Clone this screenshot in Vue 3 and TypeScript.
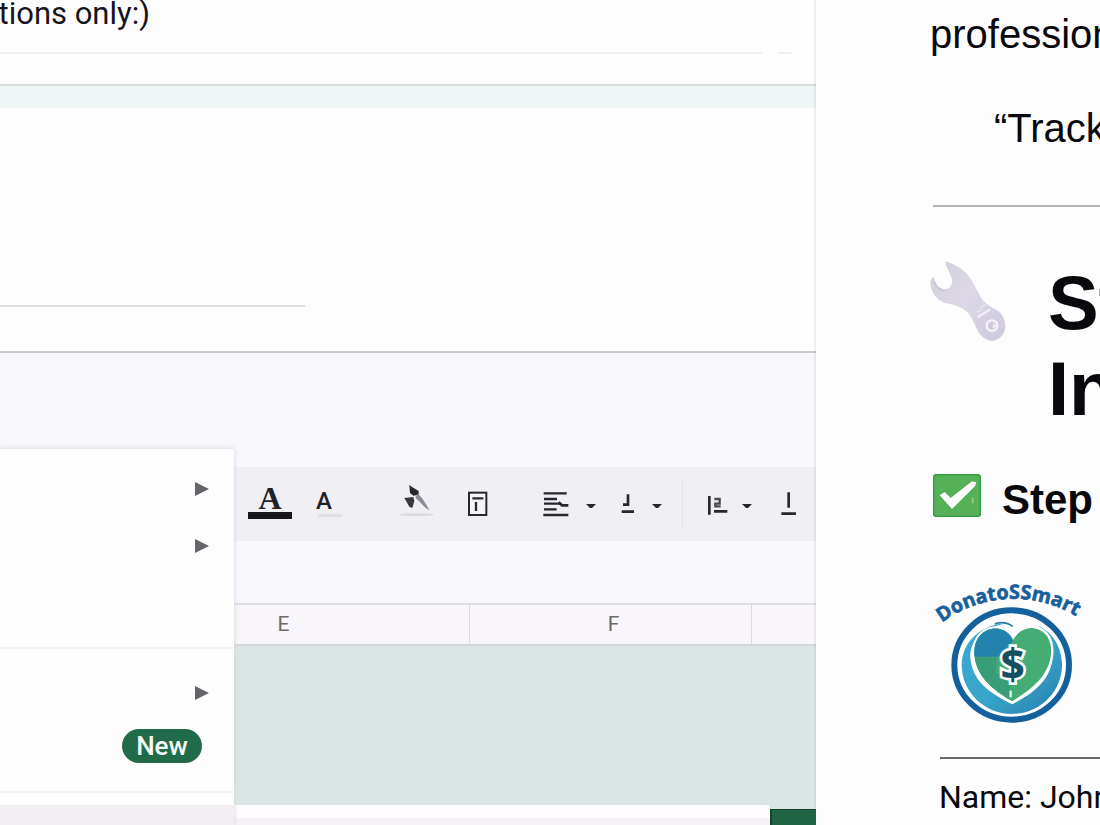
<script setup lang="ts">
interface MenuEntry {
  id: string
  label: string
  submenu?: boolean
  badge?: string
}

const upperEntries: MenuEntry[] = [
  { id: 'first', label: 'Open submenu', submenu: true },
  { id: 'second', label: 'Open submenu', submenu: true },
  { id: 'third', label: 'Menu entry' },
]
const lowerEntries: MenuEntry[] = [
  { id: 'fourth', label: 'Open submenu', submenu: true },
  { id: 'fifth', label: 'New feature', badge: 'New' },
]
const columns: string[] = ['E', 'F', '']
</script>

<template>
  <div class="workspace">
    <section class="sheet">
      <div class="prompt"><span>tions only:)</span></div>
      <div class="rule-row"><i class="rule-long"></i><i class="rule-dash"></i></div>
      <div class="band"></div>
      <div class="field"></div>
      <div class="chrome">
        <div class="toolbar" role="toolbar">
          <button class="tool color" aria-label="Text color"><b>A</b><i></i></button>
          <button class="tool letter" aria-label="Font"><b>A</b><i></i></button>
          <button class="tool paint" aria-label="Fill color">
            <svg viewBox="498 66 114 111" width="38" height="37">
              <ellipse cx="560" cy="161" rx="52" ry="4" fill="#d9d8df" />
              <path d="M538 71 L546 78 L566 90 L566 101 L550 104 L540 96Z" fill="#29282e" />
              <path d="M523 111 L550 108 L553 120 L547 141 L538 137Z" fill="#38373e" />
              <path d="M562 98 C578 108 586 126 599 148 C584 141 573 124 556 110" fill="#8d8c94" />
            </svg>
          </button>
          <button class="tool box" aria-label="Text box">
            <svg viewBox="702 90 84 84" width="28" height="28">
              <rect x="717" y="98" width="52" height="67" fill="#f5f4f9" stroke="#29282e" stroke-width="6" />
              <path d="M727 115H760M738 126V153" stroke="#29282e" stroke-width="7" fill="none" />
            </svg>
          </button>
          <button class="tool align" aria-label="Horizontal align">
            <svg viewBox="60 84 96 90" width="32" height="30">
              <path d="M71 97H140M72 114H111M72 128H122M72 145H110M70 162H145" stroke="#27262c" stroke-width="7" fill="none" />
              <path d="M116 124L126 133H145" stroke="#27262c" stroke-width="8" fill="none" />
            </svg>
          </button>
          <button class="tool caret" aria-label="Horizontal align options"><svg viewBox="0 0 14 8" width="14" height="8"><path d="M2 2H12L8 6H6Z" /></svg></button>
          <button class="tool small" aria-label="Vertical align">
            <svg viewBox="282 96 84 84" width="28" height="28">
              <path d="M324 109V140H309M305 161H342" stroke="#27262c" stroke-width="8" fill="none" />
            </svg>
          </button>
          <button class="tool caret near" aria-label="Vertical align options"><svg viewBox="0 0 14 8" width="14" height="8"><path d="M2 2H12L8 6H6Z" /></svg></button>
          <i class="separator"></i>
          <button class="tool wrap" aria-label="Text wrapping">
            <svg viewBox="552 92 84 84" width="28" height="28">
              <path d="M568 110V166M582 156H622" stroke="#27262c" stroke-width="8" fill="none" />
              <path d="M583 119H599V133H586V141H602" stroke="#4c4b52" stroke-width="7" fill="none" />
            </svg>
          </button>
          <button class="tool caret near" aria-label="Text wrapping options"><svg viewBox="0 0 14 8" width="14" height="8"><path d="M2 2H12L8 6H6Z" /></svg></button>
          <button class="tool last" aria-label="Text rotation">
            <svg viewBox="762 90 84 84" width="28" height="28">
              <path d="M806 97V143M784 161H828" stroke="#27262c" stroke-width="8" fill="none" />
            </svg>
          </button>
        </div>
      </div>
      <div class="columns">
        <span v-for="(name, index) in columns" :key="index" class="column">{{ name }}</span>
      </div>
      <div class="cells">
        <div class="strip"><i></i></div>
        <div class="tab"></div>
      </div>

      <nav class="menu">
        <div class="group upper">
          <button v-for="entry in upperEntries" :key="entry.id" class="entry" :aria-label="entry.label">
            <svg v-if="entry.submenu" class="arrow" viewBox="0 0 14 14" width="14" height="14"><path d="M0 0L14 7L0 14Z" /></svg>
          </button>
        </div>
        <div class="group lower">
          <button v-for="entry in lowerEntries" :key="entry.id" class="entry" :aria-label="entry.label">
            <svg v-if="entry.submenu" class="arrow" viewBox="0 0 14 14" width="14" height="14"><path d="M0 0L14 7L0 14Z" /></svg>
            <span v-if="entry.badge" class="badge">{{ entry.badge }}</span>
          </button>
        </div>
        <div class="hovered"></div>
      </nav>
    </section>

    <article class="doc">
      <p class="body">profession</p>
      <p class="body quote">“Track</p>
      <hr class="thin" />
      <header class="title">
        <svg viewBox="90 60 228 246" width="76" height="82" aria-hidden="true">
          <defs>
            <linearGradient id="steel" x1="0" y1="0" x2="1" y2="1">
              <stop offset="0" stop-color="#d3cedb" />
              <stop offset=".45" stop-color="#dcd8e6" />
              <stop offset="1" stop-color="#cec9dc" />
            </linearGradient>
          </defs>
          <path d="M135 66 C147 63 157 72 169 78 C191 88 208 106 220 130 L242 171 C251 187 266 197 286 208 C306 218 317 239 316 263 C313 284 296 302 275 303 C255 300 239 287 230 267 C218 238 207 215 186 205 C166 194 150 193 132 188 C109 178 94 157 91 132 C90 120 94 113 102 111 C103 126 113 143 131 147 C149 148 157 137 156 119 C152 102 140 84 135 66Z" fill="url(#steel)" />
          <path d="M103 124 C107 140 118 150 134 153" fill="none" stroke="#bfb9cb" stroke-width="3" />
          <path d="M232 232 L271 208" stroke="#f1eff4" stroke-width="7" />
          <path d="M230 217 L246 209 M241 203 L256 194" stroke="#e8e5ef" stroke-width="5" />
          <circle cx="276" cy="257" r="16" fill="#d0cbdc" stroke="#f5f3f7" stroke-width="7" />
          <path d="M280 249 L291 258 L278 266Z" fill="#f2f0f6" />
        </svg>
        <h1>St<br />In</h1>
      </header>
      <h2 class="step">
        <svg viewBox="99 42 144 129" width="48" height="43" aria-hidden="true">
          <rect x="101" y="44" width="140" height="125" rx="9" fill="#56b058" stroke="#399d43" stroke-width="5" />
          <path d="M119 106 L134 96 L152 114 L216 64 L228 67 L226 77 L156 147Z" fill="#fff" />
          <path d="M218 113V130" stroke="#8acb7d" stroke-width="6" />
        </svg>
        <span>Step</span>
      </h2>
      <svg class="logo" viewBox="42 21 450 432" width="150" height="144" role="img" aria-label="DonatoSSmart">
        <defs>
          <path id="crest" d="M66 146 A360 360 0 0 1 502 150" />
          <linearGradient id="sea" x1="0" y1="0" x2="1" y2="1">
            <stop offset="0" stop-color="#3ba9d4" />
            <stop offset=".55" stop-color="#38a4c9" />
            <stop offset="1" stop-color="#287fae" />
          </linearGradient>
          <clipPath id="heart"><path d="M277 382 C238 358 169 318 163 242 C160 184 202 157 239 165 C259 170 271 181 279 198 C293 172 322 157 348 164 C386 174 398 211 392 248 C380 320 315 356 277 382Z" /></clipPath>
        </defs>
        <ellipse cx="275" cy="273" rx="172" ry="164" fill="#fff" stroke="#14609c" stroke-width="18" />
        <path d="M270 146 C180 149 126 204 125 273 C125 354 194 420 275 420 C360 420 426 353 426 273 C426 218 396 173 354 155 C390 185 406 217 397 259 C386 331 322 367 277 391 C227 365 157 331 151 251 C148 196 194 157 270 146Z" fill="url(#sea)" />
        <path d="M224 150 C244 143 261 144 278 157" fill="none" stroke="#2a78a9" stroke-width="5" />
        <path d="M277 388 C238 364 163 320 156 242 C153 180 202 150 241 158 C259 163 271 174 279 191 C293 165 322 150 350 157 C393 168 405 211 399 248 C387 324 315 364 277 388Z" fill="#fff" />
        <g clip-path="url(#heart)">
          <rect x="155" y="150" width="250" height="240" fill="#43ad74" />
          <path d="M155 150H278V202L236 248H155Z" fill="#2383ad" />
          <path d="M155 250H230V300H270V390H155Z" fill="#3a9d79" />
        </g>
        <path d="M272 350V370" stroke="#e7f7ee" stroke-width="7" />
        <text class="dollar" x="278" y="317" text-anchor="middle">$</text>
        <text class="crest"><textPath href="#crest">DonatoSSmart</textPath></text>
      </svg>
      <hr class="strong" />
      <p class="name">Name: John</p>
    </article>
  </div>
</template>

<style>
body {
  margin: 0;
  background: #fefdfe;
}
</style>

<style scoped>
* {
  box-sizing: border-box;
}
.workspace {
  display: grid;
  grid-template-columns: minmax(0, 816fr) minmax(0, 284fr);
  height: 100vh;
  overflow: hidden;
  background: #fefdfe;
  color: #09080c;
  font-family: "Liberation Sans", Arial, sans-serif;
}
.sheet {
  position: relative;
  display: flex;
  flex-direction: column;
  overflow: hidden;
}
.sheet::after {
  content: "";
  position: absolute;
  top: 0;
  right: 0;
  bottom: 0;
  width: 2px;
  background: rgba(90, 70, 120, 0.08);
}
.prompt {
  display: flex;
  justify-content: flex-end;
  width: 150px;
  height: 52px;
  font: 31px/27px Roboto, sans-serif;
  color: #15141c;
  white-space: nowrap;
}
.rule-row {
  display: flex;
  gap: 16px;
  height: 32px;
  padding-right: 24px;
}
.rule-row i {
  height: 2px;
  background: #f0eef1;
}
.rule-long {
  flex: 1;
}
.rule-dash {
  width: 14px;
}
.band {
  height: 24px;
  border-top: 2px solid #dadddd;
  background: #eef7f6;
}
.field {
  height: 245px;
  border-bottom: 2px solid #c9c8cc;
}
.field::before {
  content: "";
  display: block;
  width: 305px;
  height: 197px;
  border-bottom: 2px solid #dddce0;
}
.chrome {
  height: 250px;
  padding: 114px 0 62px;
  background: #f8f7fb;
}
.toolbar {
  display: flex;
  align-items: center;
  height: 74px;
  padding-left: 248px;
  background: #efeff4;
}
.tool {
  flex: none;
  display: flex;
  flex-direction: column;
  align-items: center;
  padding: 0;
  border: 0;
  background: none;
  color: #222127;
}
.color {
  width: 44px;
  padding-bottom: 6px;
}
.color b {
  font: bold 32px/28px "Liberation Serif", serif;
}
.color i {
  width: 44px;
  height: 7px;
  background: #17161b;
}
.letter {
  width: 32px;
  margin-left: 16px;
  padding-bottom: 4px;
}
.letter b {
  font: 500 24px/26px Roboto, sans-serif;
}
.letter i {
  width: 24px;
  height: 3px;
  margin-left: 12px;
  background: #e1e0e6;
}
.paint {
  margin-left: 56px;
  padding-bottom: 6px;
}
.box {
  margin-left: 30px;
}
.align {
  margin-left: 48px;
}
.caret {
  margin: 4px 0 0 12px;
}
.caret.near {
  margin-left: 8px;
}
.caret svg {
  fill: #27262c;
}
.small {
  margin-left: 16px;
}
.separator {
  width: 1px;
  height: 48px;
  margin-left: 18px;
  background: #e4e3e9;
}
.wrap {
  margin-left: 21px;
}
.last {
  margin-left: 20px;
}
.columns {
  display: grid;
  grid-template-columns: 470fr 282fr 64fr;
  height: 41px;
  border-top: 2px solid #dfdde2;
  background: #f8f6fa;
}
.column {
  border-right: 1px solid #dddbe1;
  text-align: center;
  font: 21px/38px Roboto, sans-serif;
  color: #6f696b;
}
.column:first-child {
  padding-left: 98px;
}
.column:nth-child(2) {
  padding-left: 6px;
}
.column:last-child {
  border-right: 0;
}
.cells {
  flex: 1;
  display: flex;
  align-items: flex-end;
  border-top: 2px solid #d0dbd8;
  background: #dbe6e4;
}
.strip {
  flex: 1;
  height: 20px;
  padding-top: 13px;
  border-radius: 0 4px 0 0;
  background: #fefcfe;
}
.strip i {
  display: block;
  height: 7px;
  background: #f6f1f5;
}
.tab {
  width: 46px;
  height: 16px;
  border-top: 1px solid #13442d;
  border-left: 2px solid #13442d;
  background: #216345;
}
.menu {
  position: absolute;
  top: 449px;
  bottom: 0;
  left: 0;
  display: flex;
  flex-direction: column;
  width: 234px;
  background: #fefdfe;
  box-shadow: 0 0 5px #d3d2d9;
}
.group {
  border-bottom: 2px solid #f3f1f5;
}
.upper {
  padding: 11px 0 16px;
}
.lower {
  padding: 17px 0 19px;
}
.entry {
  display: flex;
  align-items: center;
  justify-content: flex-end;
  width: 100%;
  height: 57px;
  padding: 0 25px 0 0;
  border: 0;
  background: none;
}
.lower .entry {
  height: 53px;
}
.lower .entry:last-child {
  padding-right: 32px;
}
.arrow {
  fill: #666469;
}
.badge {
  width: 80px;
  height: 34px;
  border-radius: 17px;
  background: #216b4b;
  text-align: center;
  font: 500 26px/34px Roboto, sans-serif;
  color: #f6fbf8;
}
.hovered {
  flex: 1;
  margin-top: 12px;
  background: #f1eff2;
}
.doc {
  display: flex;
  flex-direction: column;
  overflow: hidden;
  padding: 11px 0 0 114px;
  white-space: nowrap;
}
.doc p,
.doc h1,
.doc h2 {
  margin: 0;
}
.body {
  font-size: 40px;
  line-height: 46px;
}
.doc .quote {
  margin-top: 48px;
  padding-left: 64px;
}
hr {
  flex: none;
  width: auto;
  height: 2px;
  border: 0;
}
.thin {
  margin: 54px 0 53px 3px;
  background: #b7b4b9;
}
.title {
  display: flex;
  align-items: flex-start;
  gap: 42px;
}
.title svg,
.step svg,
.logo {
  flex: none;
}
h1 {
  font-size: 76px;
  line-height: 86px;
}
.step {
  display: flex;
  align-items: flex-start;
  gap: 21px;
  padding-left: 3px;
  font-size: 42px;
  line-height: 52px;
}
.doc .step {
  margin-top: 42px;
}
.logo {
  margin: 55px 0 0 4px;
  overflow: visible;
}
.crest {
  font: bold 59px "Open Sans", sans-serif;
  fill: #17609b;
  stroke: #17609b;
  stroke-width: 2px;
}
.dollar {
  font: bold 128px "Open Sans", sans-serif;
  fill: #164f60;
  stroke: #fff;
  stroke-width: 16px;
  paint-order: stroke;
}
.strong {
  margin: 32px 0 0 10px;
  background: #6b696d;
}
.doc .name {
  margin-top: 19px;
  padding-left: 9px;
  font: 32px/38px Roboto, sans-serif;
}
</style>
